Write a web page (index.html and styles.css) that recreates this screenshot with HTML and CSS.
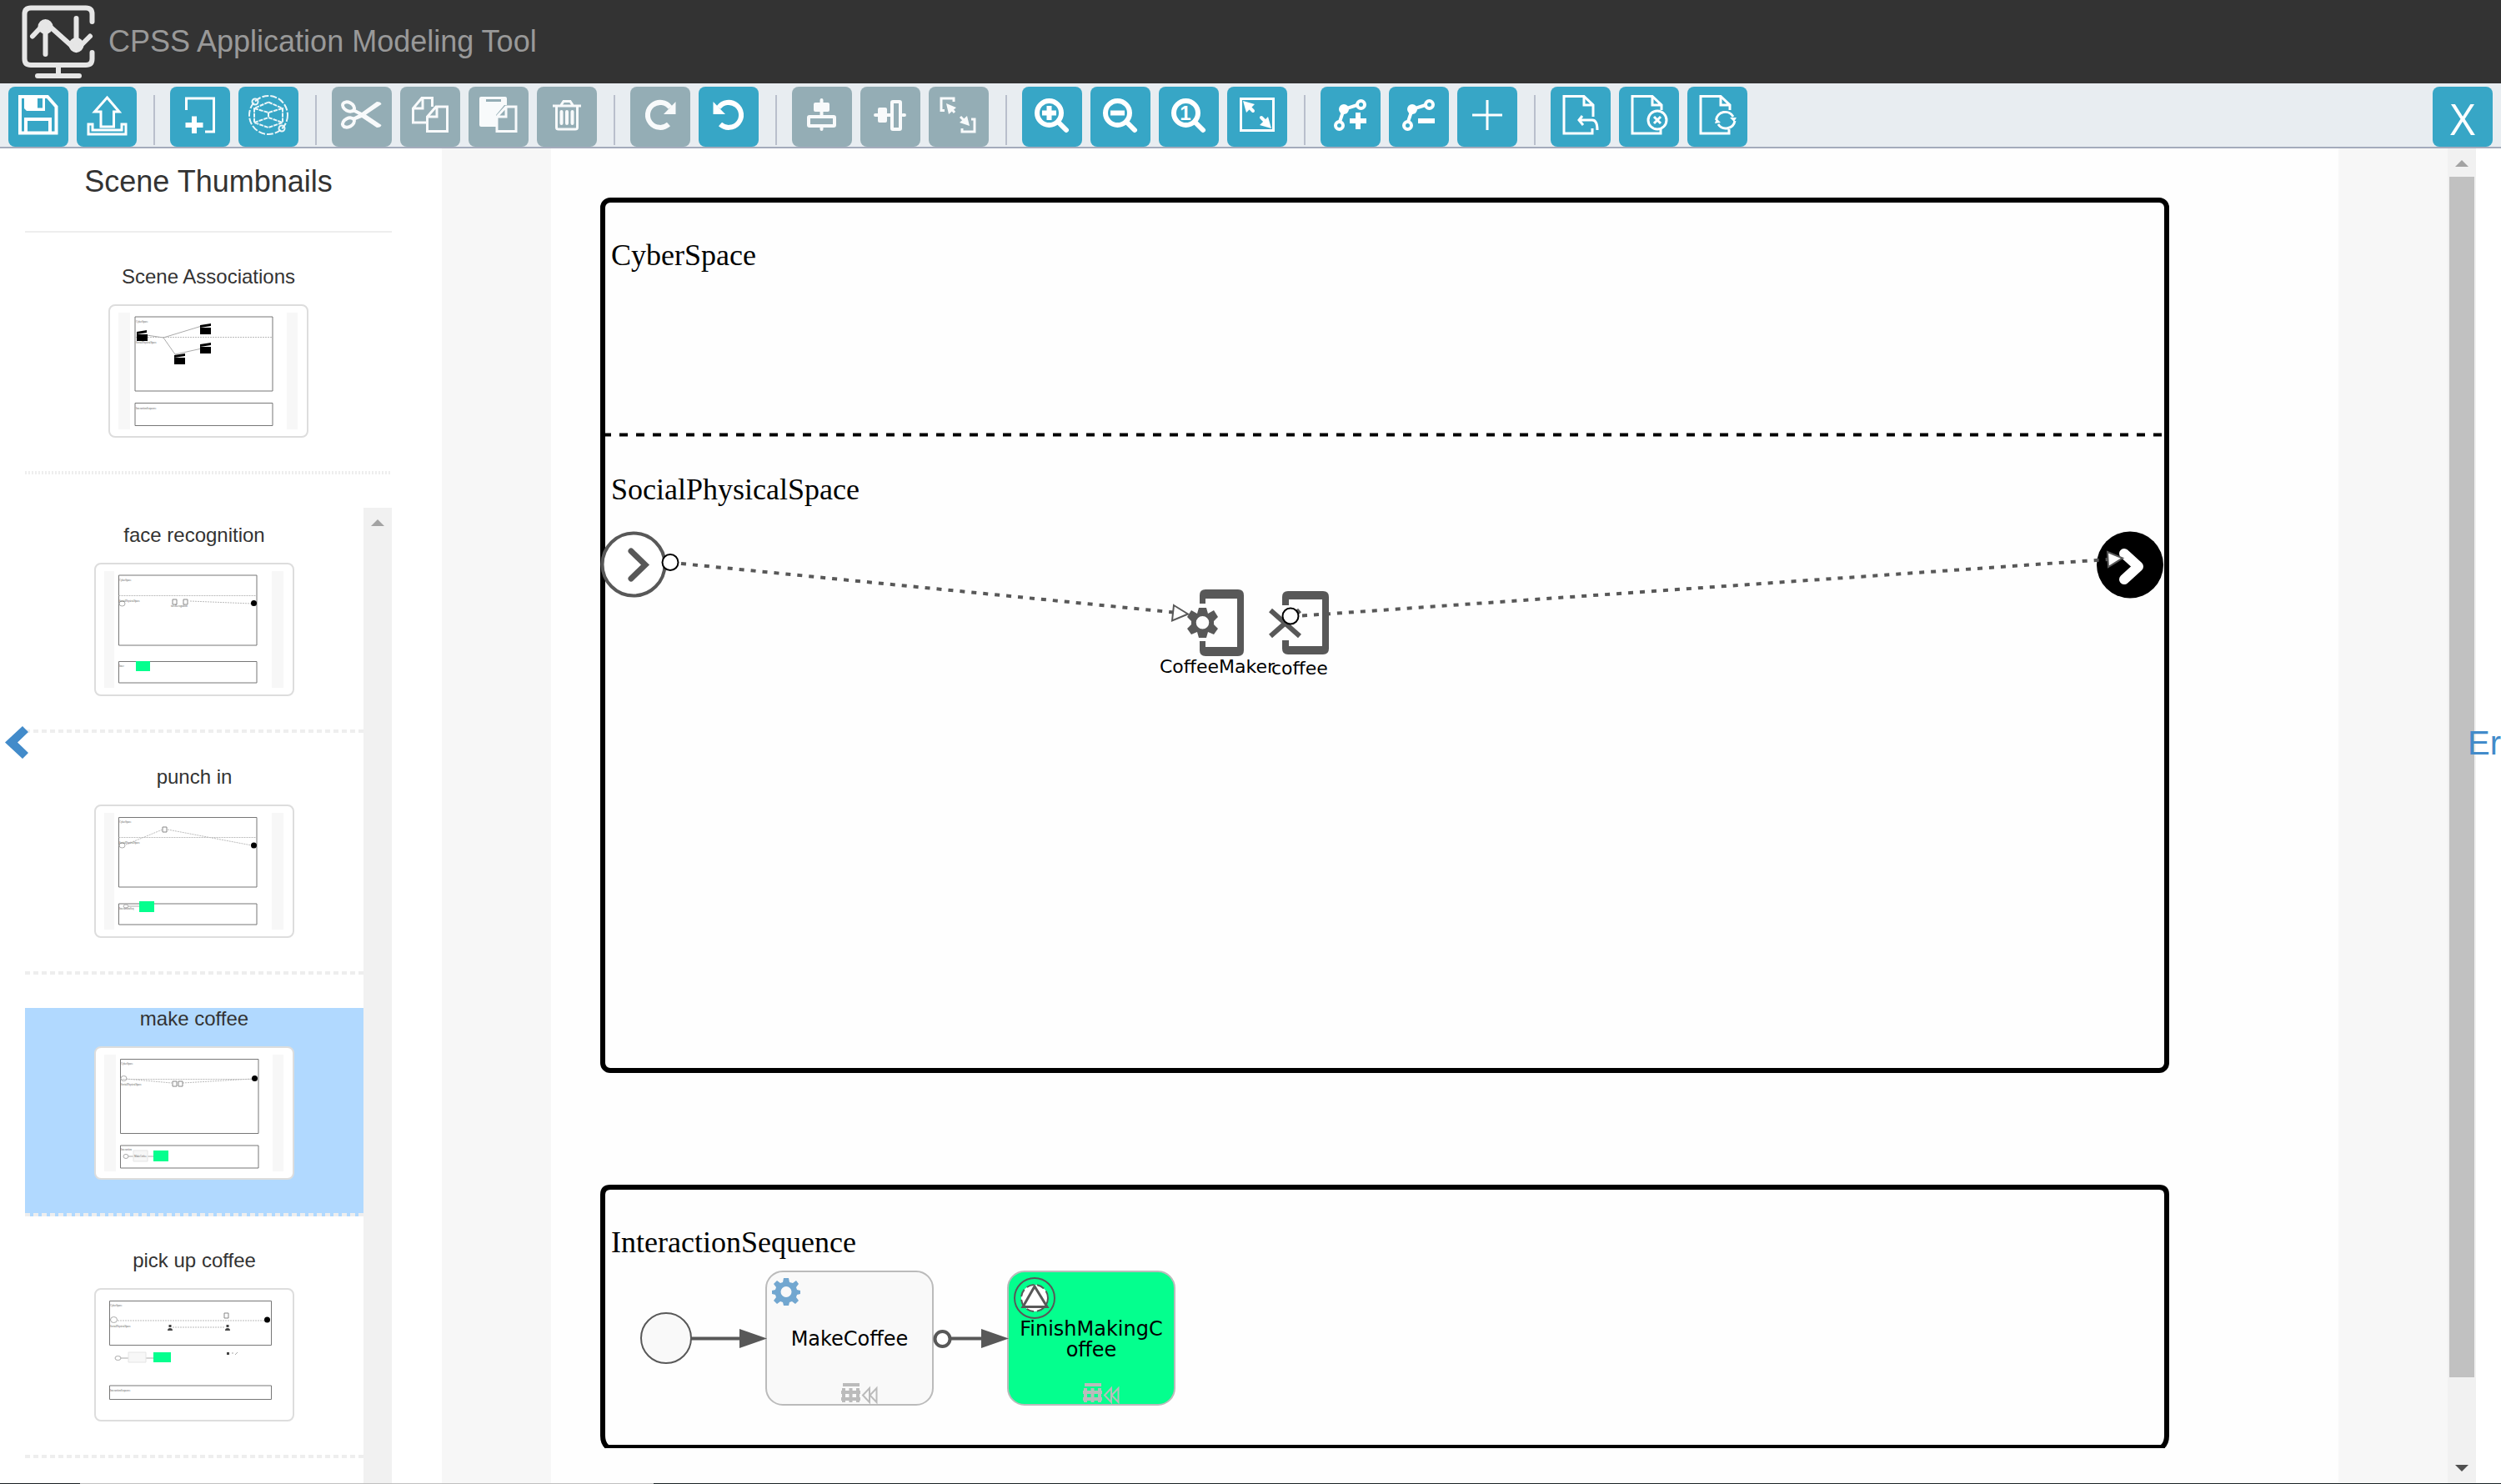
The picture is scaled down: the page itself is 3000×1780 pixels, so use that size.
FILE: index.html
```html
<!DOCTYPE html>
<html lang="en">
<head>
<meta charset="utf-8">
<title>CPSS Application Modeling Tool</title>
<link rel="stylesheet" href="styles.css">
</head>
<body>
<header class="navbar">
  <svg class="logo" width="92" height="92" viewBox="24 4 92 92" aria-hidden="true">
    <path d="M110.500 26V17Q110.500 9.500 103 9.500H37Q29.500 9.500 29.500 17V70.500Q29.500 78 37 78H103Q110.500 78 110.500 70.500V63"/>
    <path d="M70 78V90M45 91H95M54.500 30V65M91.500 22V56M39 43.500L54.500 27L91.500 60L108 43.500"/>
    <circle cx="54.500" cy="32" r="6"/><circle cx="91.500" cy="54" r="6"/>
  </svg>
  <span class="brand">CPSS Application Modeling Tool</span>
</header>

<nav class="toolbar" aria-label="Editor tools">
  <div class="group">
    <button class="tool" title="Save"><svg viewBox="0 0 72 72"><path class="w4" d="M14 12H47L57.500 24V55.500H14zM21 56V39H50V56"/><path class="f" fill-rule="evenodd" d="M19 12H44V29H22L19 26zM35 14V25.500H41V14z"/></svg></button>
    <button class="tool" title="Export"><svg viewBox="0 0 72 72"><path class="w3" d="M36.500 13L51 30H44.500V48H29V30H21.500zM14 45H19V52H54V45H59V57H14z"/></svg></button>
  </div>
  <div class="group">
    <button class="tool" title="New scene"><svg viewBox="0 0 72 72"><path class="w3" d="M19.500 28V14H52.500V54H42"/><path class="w6" d="M29 35.500V56M18.500 46H39.500"/></svg></button>
    <button class="tool" title="Space view"><svg viewBox="0 0 72 72"><g class="w2"><circle cx="36" cy="34" r="23" stroke-dasharray="8 2"/><path stroke-dasharray="5 1" d="M36 18.500L53 26V43L36 49L19 43V26zM19 26L36 31L53 26M19 43L36 37L53 43M36 31V37"/><circle cx="20" cy="18" r="3.500"/><circle cx="52" cy="50" r="3.500"/></g></svg></button>
  </div>
  <div class="group">
    <button class="tool" title="Cut" disabled><svg viewBox="0 0 72 72"><ellipse class="w4" cx="20" cy="24" rx="7.500" ry="5" transform="rotate(28 20 24)"/><ellipse class="w4" cx="20" cy="43" rx="7.500" ry="5" transform="rotate(-28 20 43)"/><path class="f" d="M26 26L36 31L54 18Q59 18 59.500 21L41 33.500L59.500 46Q59 49 54 49L36 37L26 41L25 37L32 33.500L25 30z"/></svg></button>
    <button class="tool" title="Copy" disabled><svg viewBox="0 0 72 72"><path class="w3" d="M31 43H15.500V26L26 13.500H38.500V24M27 14V26H16M32.500 53.500V36L43 24H56.500V53.500zM44 25V36H33"/></svg></button>
    <button class="tool" title="Paste" disabled><svg viewBox="0 0 72 72"><path class="f" fill-rule="evenodd" d="M15 12H44Q46 12 46 14V22H43L33 34V48H15Q13 48 13 46V14Q13 12 15 12zM21 15V18H39V15z"/><path class="w3" d="M34 53.500V36L45 24H57V53.500zM45 25V36H35"/></svg></button>
    <button class="tool" title="Delete" disabled><svg viewBox="0 0 72 72"><path class="w3" d="M19 23H53M29 22L32 17.500H40L43 22M23.500 24V49Q23.500 51 26 51H46Q48.500 51 48.500 49V24"/><path class="w4 round" d="M29.500 30V44M36 30V44M42.500 30V44"/></svg></button>
  </div>
  <div class="group">
    <button class="tool" title="Redo" disabled><svg viewBox="0 0 72 72"><path class="w6" d="M46 45A15 15 0 1 1 48 25"/><path class="f" d="M54.500 18V33H40z"/></svg></button>
    <button class="tool" title="Undo"><svg viewBox="0 0 72 72"><path class="w6" d="M26 45A15 15 0 1 0 24 25"/><path class="f" d="M17.500 18V33H32z"/></svg></button>
  </div>
  <div class="group">
    <button class="tool" title="Align vertical" disabled><svg viewBox="0 0 72 72"><path class="w4 round" d="M35.500 16V34M35.500 49V51"/><rect class="f" x="26" y="19" width="19" height="11" rx="2"/><rect class="w4" x="20" y="36" width="31" height="11" rx="1"/></svg></button>
    <button class="tool" title="Align horizontal" disabled><svg viewBox="0 0 72 72"><path class="w4 round" d="M18 34H36M51 34H53"/><rect class="f" x="21" y="25" width="11" height="18" rx="2"/><rect class="w4" x="38" y="18" width="10" height="33" rx="1"/></svg></button>
    <button class="tool" title="Same size" disabled><svg viewBox="0 0 72 72"><path class="w3" d="M19 28.500H15V14H30V18M51 39H55V54H40V50M26 25L31 31M38 36L44 42"/><path class="f" d="M21 20L33 25L24 33zM49 47L37 43L46 35z"/></svg></button>
  </div>
  <div class="group">
    <button class="tool" title="Zoom in"><svg viewBox="0 0 72 72"><circle class="w6" cx="32.500" cy="31.500" r="14.500"/><path class="w6 round" d="M44 43L53 52"/><path class="w6" d="M32.500 23V40M24 31.500H41"/></svg></button>
    <button class="tool" title="Zoom out"><svg viewBox="0 0 72 72"><circle class="w6" cx="32.500" cy="31.500" r="14.500"/><path class="w6 round" d="M44 43L53 52"/><path class="w6" d="M24 31.500H41"/></svg></button>
    <button class="tool" title="Actual size"><svg viewBox="0 0 72 72"><circle class="w6" cx="32.500" cy="31.500" r="14.500"/><path class="w6 round" d="M44 43L53 52"/><text class="one" x="32" y="40">1</text></svg></button>
    <button class="tool" title="Fit to screen"><svg viewBox="0 0 72 72"><rect class="w3" x="16.500" y="14.500" width="39" height="38"/><path class="w4 round" d="M24 22L31 29M48 44L41 37"/><path class="f" d="M19 17L33 21L23 31zM53 50L39 46L49 36z"/></svg></button>
  </div>
  <div class="group">
    <button class="tool" title="Add bend point"><svg viewBox="0 0 72 72"><path class="w4" d="M23 42L28 27L44 22"/><circle class="f" cx="28" cy="27" r="6"/><circle class="w4" cx="48.500" cy="21.500" r="4.500"/><circle class="w4" cx="22.500" cy="46.500" r="4.500"/><path class="w6" d="M45 31V51M35 41H55"/></svg></button>
    <button class="tool" title="Remove bend point"><svg viewBox="0 0 72 72"><path class="w4" d="M23 42L28 27L44 22"/><circle class="f" cx="28" cy="27" r="6"/><circle class="w4" cx="48.500" cy="21.500" r="4.500"/><circle class="w4" cx="22.500" cy="46.500" r="4.500"/><path class="w6" d="M35 41H55"/></svg></button>
    <button class="tool" title="Add"><svg viewBox="0 0 72 72"><path class="w3" d="M36 16V52M18 34H54"/></svg></button>
  </div>
  <div class="group">
    <button class="tool" title="Restore file"><svg viewBox="0 0 72 72"><path class="w3" d="M51 36V22L40 11.500H16V56H50V50M40 12V22H51M38 35L34 40L39 46M34 40H50Q56 40 56 52"/></svg></button>
    <button class="tool" title="Close file"><svg viewBox="0 0 72 72"><path class="w3" d="M51 28V22L40 11.500H16V56H50V51M40 12V22H51M42 36L50 44M50 36L42 44"/><circle class="w3" cx="46" cy="40" r="11"/></svg></button>
    <button class="tool" title="Refresh file"><svg viewBox="0 0 72 72"><path class="w3" d="M51 28V22L40 11.500H16V56H50V51M40 12V22H51M34.500 40A11 11 0 0 1 55 36M57 41A11 11 0 0 1 37 45"/><path class="f" d="M51 37H59L56 42zM33 44L35 38L40 43z"/></svg></button>
  </div>
  <button class="tool close" title="Close editor">X</button>
</nav>

<main class="workspace">
  <a class="collapse" href="#scenes" aria-label="Collapse panel"><svg width="28" height="40" viewBox="0 0 28 40"><path d="M21 0L28 7L15 19.500L28 32L21 39L0 19.500z"/></svg></a>

  <aside class="sidebar" id="scenes">
    <h1>Scene Thumbnails</h1>
    <a class="scene overview" href="#associations">
      <span>Scene Associations</span>
      <svg class="thumb" viewBox="2 2 236 156" aria-hidden="true">
        <path class="strip" d="M12 10H26V150H12zM214 10H227V150H214z"/>
        <path class="frame" d="M32 15H197V104H32zM32 118.500H197V145.500H32z"/>
        <path class="dash" d="M32 39.500H197"/>
        <path class="link" d="M46 37L66 40L112 26M66 40L80 60L112 53"/>
        <path class="solid" d="M34 36h13v8h-13zM34 33l12 -2v3l-12 2zM110 28h13v8h-13zM110 25l13 -2v3l-13 2zM110 51h13v8h-13zM110 48l13 -2v3l-13 2zM79 64h13v8h-13zM79 61l13 -2v3l-13 2z"/>
        <text x="33" y="22">CyberSpace</text><text x="33" y="47">SocialPhysicalSpace</text><text x="33" y="126">InteractionSequence</text>
      </svg>
    </a>
    <div class="scroller">
      <div class="list">
        <a class="scene" href="#face">
          <span>face recognition</span>
          <svg class="thumb" viewBox="2 2 236 156" aria-hidden="true">
            <path class="strip" d="M12 10H24V150H12zM213 10H227V150H213z"/>
            <path class="frame" d="M29.500 15H195V99H29.500zM29.500 118.500H195V144H29.500z"/>
            <path class="dash" d="M29.500 39.500H195M115 46L189 49"/>
            <ellipse class="link" cx="33.500" cy="49" rx="3.500" ry="3"/><circle class="solid" cx="191.500" cy="48.500" r="3.500"/>
            <path class="icon" d="M94 44h5v6h-5zM107 44h5v6h-5z"/><path class="green" d="M50 118h17v12h-17z"/>
            <text x="30" y="22">CyberSpace</text><text x="30" y="47">SocialPhysicalSpace</text><text x="30" y="125">Inter</text><text x="92" y="53">faceRecognition</text>
          </svg>
        </a>
        <a class="scene" href="#punch">
          <span>punch in</span>
          <svg class="thumb" viewBox="2 2 236 156" aria-hidden="true">
            <path class="strip" d="M12 10H24V150H12zM213 10H227V150H213z"/>
            <path class="frame" d="M29.500 15.500H195V99H29.500zM29.500 119H195V144H29.500z"/>
            <path class="dash" d="M29.500 39.500H195M38 48L82 30M88 30L189 49"/>
            <ellipse class="link" cx="33.500" cy="49" rx="3.500" ry="3"/><circle class="solid" cx="191.500" cy="49" r="3.500"/>
            <path class="icon" d="M82 27h5v6h-5z"/><ellipse class="link" cx="38" cy="122" rx="3" ry="2"/><path class="link" d="M41 122H54"/><path class="green" d="M54 116h18v13h-18z"/>
            <text x="30" y="22">CyberSpace</text><text x="30" y="47">SocialPhysicalSpace</text><text x="30" y="126">InteractionSeq</text>
          </svg>
        </a>
        <a class="scene active" href="#make" aria-current="true">
          <span>make coffee</span>
          <svg class="thumb" viewBox="2 2 236 156" aria-hidden="true">
            <path class="strip" d="M12 10H26V150H12zM214 10H227V150H214z"/>
            <path class="frame" d="M31.500 15.500H197V104.500H31.500zM31.500 119H197V146H31.500z"/>
            <path class="dash" d="M31.500 39.500H197M38 39L93 44M106 44L190 39"/>
            <ellipse class="link" cx="35.500" cy="38.500" rx="3.500" ry="3"/><circle class="solid" cx="192.500" cy="38.500" r="3.500"/>
            <path class="icon" d="M94 42h5v6h-5zM101 42h5v6h-5z"/><ellipse class="link" cx="38" cy="132" rx="3" ry="2.500"/><path class="link" d="M41 132H47M64 132H71"/><path class="task" d="M47 125h17v13h-17z"/><path class="green" d="M71 125h18v13h-18z"/>
            <text x="32" y="22">CyberSpace</text><text x="32" y="47">SocialPhysicalSpace</text><text x="32" y="125">Interaction</text><text x="48" y="133">MakeCoffee</text>
          </svg>
        </a>
        <a class="scene" href="#pickup">
          <span>pick up coffee</span>
          <svg class="thumb" viewBox="2 2 236 156" aria-hidden="true">
            <path class="frame" d="M18.500 15.500H212.500V68.500H18.500zM18.500 117H212.500V133.500H18.500z"/>
            <path class="dash" d="M28 39H204M94 47H156"/>
            <ellipse class="link" cx="23.500" cy="38" rx="4" ry="3.500"/><circle class="solid" cx="207.500" cy="38" r="3.500"/>
            <path class="icon" d="M156 30h5v6h-5z"/><path class="person" d="M88 51Q88 48 91 48Q94 48 94 51zM157 51Q157 48 160 48Q163 48 163 51zM89.500 44h3v3h-3zM158.500 44h3v3h-3zM159 77h3v3h-3z"/><ellipse class="link" cx="28.500" cy="84" rx="3.500" ry="2.500"/><path class="link" d="M32 84H41M62 84H71M165 78h2M169 80l3 -3"/><path class="task" d="M41 77h21v12h-21z"/><path class="green" d="M71 77h21v12h-21z"/>
            <text x="19" y="22">CyberSpace</text><text x="19" y="47">SocialPhysicalSpace</text><text x="19" y="124">InteractionSequence</text>
          </svg>
        </a>
      </div>
      <div class="bar"><i class="up"></i></div>
    </div>
  </aside>

  <section class="canvas">
    <div class="gutter"></div>
    <svg class="diagram" viewBox="661 177 2144 1601" preserveAspectRatio="xMidYMin meet" role="img" aria-label="make coffee scene">
      <rect class="lane" x="723" y="239" width="1876" height="1044" rx="9"/>
      <path class="lane" d="M728 1734Q723 1730 723 1721V1432Q723 1423 732 1423H2590Q2599 1423 2599 1432V1721Q2599 1730 2594 1734"/>
      <path class="lane base" d="M725 1734H2597"/>
      <path class="divider" d="M723 520.500H2596"/>
      <text class="title" x="733" y="317">CyberSpace</text>
      <text class="title" x="733" y="598">SocialPhysicalSpace</text>
      <text class="title" x="733" y="1501">InteractionSequence</text>

      <circle class="start" cx="760" cy="676" r="37.500"/>
      <path class="chev" d="M757 660L774 676.500L757 693"/>

      <!-- coffee maker: device with gear -->
      <g class="shade">
        <path d="M1439 723V713Q1439 706 1446 706H1485Q1492 706 1492 713V779Q1492 786 1485 786H1446Q1439 786 1439 779V768H1446V775H1484V717H1446V723z"/>
        <path fill-rule="evenodd" d="M1438 728H1447L1449 735L1456 731L1461 739L1456 744V748L1461 753L1456 760L1449 757L1447 764H1438L1436 757L1429 760L1424 753L1429 748V744L1424 739L1429 731L1436 735zM1442.500 738A7.500 7.500 0 1 0 1442.500 753.500A7.500 7.500 0 1 0 1442.500 738z"/>
        <path d="M1538 725V715Q1538 708 1545 708H1587Q1594 708 1594 715V777Q1594 784 1587 784H1545Q1538 784 1538 777V767H1546V774H1586V718H1546V725z"/>
      </g>
      <path class="cross" d="M1524 731L1559 762M1559 731L1524 762"/>
      <text class="label" x="1391" y="806">CoffeeMaker</text>
      <text class="label" x="1525" y="808">coffee</text>

      <circle class="finish" cx="2555" cy="676.500" r="40"/>
      <path class="chev end" d="M2548 663L2565 678.500L2548 694"/>
      <path class="flow" d="M817 675L1408 733.500M1562 737.500L2528 670"/>
      <path class="tip" d="M1408 725L1425 735.500L1406 743.500zM2528 661L2546 668.500L2529 679z"/>
      <circle class="port" cx="804" cy="673.500" r="9.500"/>
      <circle class="port" cx="1548" cy="738" r="9.500"/>

      <circle class="event" cx="799" cy="1604" r="30"/>
      <rect class="task" x="919" y="1524" width="200" height="160" rx="20"/>
      <rect class="task green" x="1209" y="1524" width="200" height="160" rx="20"/>
      <path class="seq" d="M829 1604.500H890M1141 1604.500H1180"/>
      <path class="shade" d="M887 1593L920 1604.500L887 1616zM1177 1593L1210 1604.500L1177 1616z"/>
      <circle class="seqport" cx="1130.500" cy="1605" r="9"/>

      <path class="gear" fill-rule="evenodd" d="M940 1532H946L947 1537L951 1538L955 1535L958 1539L955 1543L956 1546L960 1547V1551L956 1552L955 1555L958 1559L954 1563L950 1560L947 1561L946 1565H940L939 1561L936 1560L932 1563L928 1559L931 1555L930 1552L926 1551V1547L930 1546L931 1543L928 1539L932 1535L936 1538L939 1537zM943 1542A6.500 6.500 0 1 0 943 1555A6.500 6.500 0 1 0 943 1542z"/>
      <g class="signal"><circle cx="1241" cy="1556" r="24"/><circle class="disc" cx="1241" cy="1556" r="16"/><path d="M1241 1542L1227 1566.500H1256z"/></g>
      <g id="markers" class="marks"><path d="M1011 1660H1031M1009 1669H1032M1009 1677H1032M1012 1664V1681M1020.500 1664V1681M1029 1664V1681"/><path class="thin" d="M1043 1664V1681L1035 1672.500zM1051.500 1664V1681L1043.500 1672.500z"/></g>
      <use href="#markers" x="290"/>
      <text class="name" x="1019" y="1613">MakeCoffee</text>
      <text class="name" x="1309" y="1601">FinishMakingC</text>
      <text class="name" x="1309" y="1626">offee</text>
    </svg>
    <div class="gutter"></div>
    <div class="bar page"><i class="up"></i><b></b><i class="down"></i></div>
  </section>
  <a class="environment" href="#environment">Er</a>
</main>
<div class="taskbar"></div>
</body>
</html>
```

FILE: styles.css
```css
* { box-sizing: border-box; }
body {
  margin: 0;
  height: 100vh;
  display: flex;
  flex-direction: column;
  overflow: hidden;
  background: #fff;
  color: #333;
  font-family: "Liberation Sans", Arial, sans-serif;
}
a { color: inherit; text-decoration: none; }

.navbar {
  flex: none;
  display: flex;
  align-items: center;
  gap: 14px;
  height: 100px;
  padding-left: 24px;
  background: #333;
}
.logo { fill: none; stroke: #e6e6e6; stroke-width: 6; stroke-linecap: round; stroke-linejoin: round; }
.logo circle { fill: #e6e6e6; }
.brand { font-size: 36px; color: #999; }

.toolbar {
  flex: none;
  display: flex;
  height: 78px;
  padding: 4px 10px 0;
  background: #e8edf1;
  border-bottom: 2px solid #a4abbc;
}
.group { display: flex; gap: 10px; }
.group + .group::before {
  content: "";
  width: 2px;
  height: 60px;
  margin: 10px 8px 0 20px;
  background: #b9bfcc;
}
.tool {
  width: 72px;
  height: 72px;
  padding: 0;
  border: 0;
  border-radius: 8px;
  background: #37a6c6;
  color: #fff;
  font-family: inherit;
}
.tool:disabled { background: #94adb5; color: #f8fafb; }
.tool svg { display: block; width: 72px; height: 72px; fill: none; }
.tool .f { fill: currentColor; }
.w2, .w3, .w4, .w6 { stroke: currentColor; }
.w2 { stroke-width: 2px; opacity: .9; }
.w3 { stroke-width: 3px; }
.w4 { stroke-width: 4px; }
.w6 { stroke-width: 6px; }
.round { stroke-linecap: round; }
.one { fill: currentColor; font-size: 24px; font-weight: bold; text-anchor: middle; }
.close { margin-left: auto; padding-top: 4px; font: 500 52px/60px "Open Sans", sans-serif; }

.workspace { position: relative; flex: 1; min-height: 0; display: flex; }
.collapse { position: absolute; z-index: 1; left: 6px; top: 50%; margin-top: -108px; }
.collapse path { fill: #428bca; }

.sidebar {
  flex: none;
  display: flex;
  flex-direction: column;
  width: 530px;
  padding: 20px 60px 0 30px;
}
.sidebar h1 {
  margin: 0 0 40px;
  padding-bottom: 39px;
  border-bottom: 2px solid #eee;
  font-size: 36px;
  line-height: 40px;
  font-weight: normal;
  text-align: center;
}
.scene {
  flex: none;
  display: flex;
  flex-direction: column;
  align-items: center;
  gap: 20px;
  height: 250px;
  font-size: 24px;
  line-height: 26px;
  background: repeating-linear-gradient(90deg, #eee 0 6px, transparent 6px 10px) bottom / 100% 4px no-repeat;
}
.overview { background-image: repeating-linear-gradient(90deg, #eee 0 2px, transparent 2px 4px); }
.active { background-color: #b1d9ff; }
.thumb {
  width: 240px;
  height: 160px;
  border: 2px solid #ddd;
  border-radius: 8px;
  background: #fff;
  fill: none;
}
.thumb text { fill: #555; font: 3px "Liberation Serif", serif; }
.thumb .strip { fill: #f7f7f7; }
.thumb .frame { stroke: #777; stroke-width: 1px; }
.thumb .dash { stroke: #bbb; stroke-dasharray: 2 1; }
.thumb .link { stroke: #aaa; }
.thumb .icon { stroke: #888; }
.thumb .solid { fill: #000; }
.thumb .person { fill: #444; }
.thumb .task { fill: #f7f7f7; stroke: #e5e5e5; }
.thumb .green { fill: #04ff8e; }

.scroller { flex: 1; min-height: 0; display: flex; margin-top: 40px; }
.list { flex: 1; display: flex; flex-direction: column; gap: 40px; padding-top: 20px; overflow: hidden; }
.bar {
  flex: none;
  display: flex;
  flex-direction: column;
  align-items: center;
  width: 34px;
  padding: 14px 0;
  background: #f1f1f1;
}
.up, .down { flex: none; border: 8px solid transparent; border-top-width: 0; border-bottom: 8px solid #a3a3a3; }
.down { border-top: 8px solid #505050; border-bottom-width: 0; }
.page b { flex: 1; width: 30px; margin: 12px 0 105px; background: #c1c1c1; }

.canvas { flex: 1; min-width: 0; display: flex; margin-right: 30px; }
.gutter { flex: none; width: 131px; background: #f7f7f7; }
.diagram { flex: 1; min-width: 0; background: #fefefe; fill: none; }
.finish { fill: #000; }
.lane { stroke: #000; stroke-width: 6px; fill: none; }
.base { stroke-width: 4px; }
.divider { stroke: #000; stroke-width: 4px; stroke-dasharray: 10 10; }
.title { fill: #000; font: 36px "Liberation Serif", serif; }
.label { fill: #000; font: 22px "DejaVu Sans", sans-serif; }
.name { fill: #000; font: 24px "DejaVu Sans", sans-serif; text-anchor: middle; }
.start { fill: #fff; stroke: #585858; stroke-width: 4px; }
.chev { stroke: #585858; stroke-width: 7px; stroke-linecap: round; }
.end { stroke: #fff; stroke-width: 12px; stroke-linejoin: round; }
.shade { fill: #585858; }
.cross { stroke: #585858; stroke-width: 6px; }
.flow { stroke: #585858; stroke-width: 4px; stroke-dasharray: 6 8; }
.tip { fill: #fff; stroke: #585858; stroke-width: 2px; }
.port { fill: #fff; stroke: #000; stroke-width: 2px; }
.event { fill: #f9f9f9; stroke: #585858; stroke-width: 2px; }
.diagram .task { fill: #f9f9f9; stroke: #bbb; stroke-width: 2px; }
.diagram .green { fill: #04ff8e; }
.seq { stroke: #585858; stroke-width: 4px; }
.seqport { fill: #fff; stroke: #585858; stroke-width: 4px; }
.gear { fill: #72a7d0; }
.signal { stroke: #585858; stroke-width: 2px; }
.signal .disc { fill: #fff; stroke-dasharray: 9 4; }
.signal path { stroke-width: 3px; }
.marks { stroke: #bbb; stroke-width: 4px; }
.thin { stroke-width: 2px; }

.environment { position: absolute; right: 0; top: 50%; margin-top: -110px; font-size: 40px; color: #428bca; }
.taskbar { flex: none; height: 1px; background: linear-gradient(90deg, #1b2024 0 96px, #c0c0c0 96px 784px, #1b2426 784px); }
```
